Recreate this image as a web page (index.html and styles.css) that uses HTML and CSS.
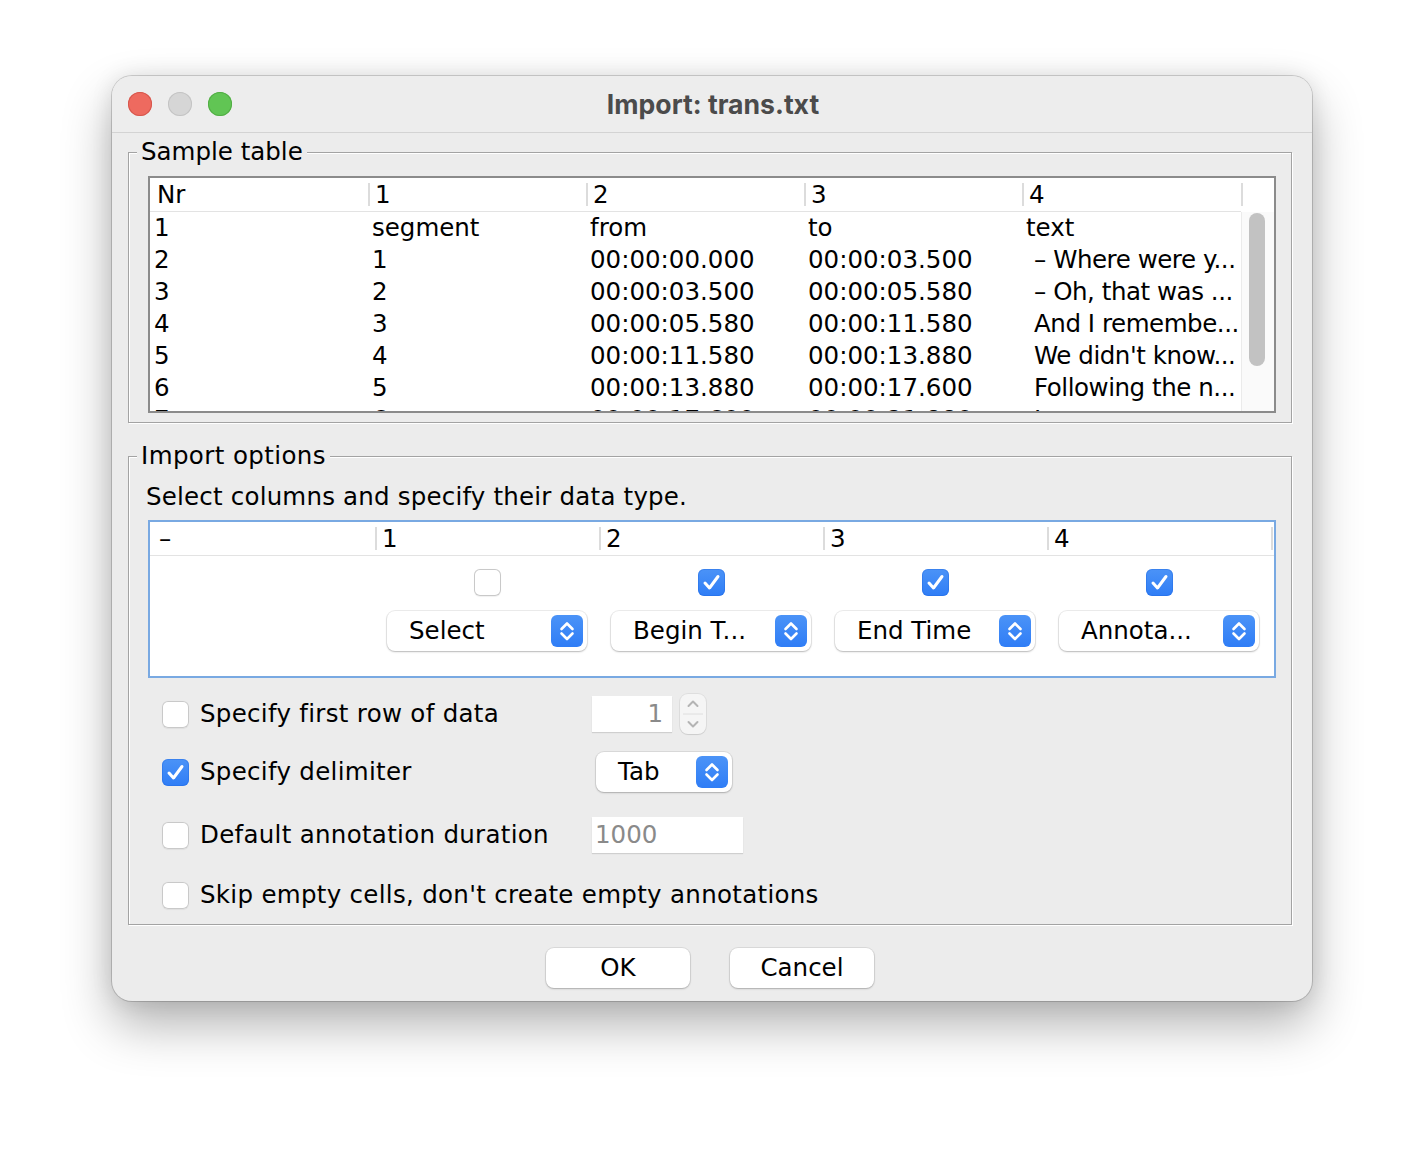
FILE: index.html
```html
<!DOCTYPE html>
<html>
<head>
<meta charset="utf-8">
<title>Import: trans.txt</title>
<link rel="stylesheet" href="styles.css">
</head>
<body>
<div class="window">
  <div class="titlebar">
    <div class="lights">
      <span class="light red"></span>
      <span class="light gray"></span>
      <span class="light green"></span>
    </div>
    <div class="title">Import: trans.txt</div>
    <div></div>
  </div>

  <div class="content">
    <section class="group sample-group">
      <div class="group-title">Sample table</div>
      <div class="table-box">
        <div class="table-main">
          <div class="thead">
            <div class="th first">Nr</div>
            <div class="th"><i class="sep"></i>1</div>
            <div class="th"><i class="sep"></i>2</div>
            <div class="th"><i class="sep"></i>3</div>
            <div class="th"><i class="sep"></i>4</div>
          </div>
          <div class="tbody">
            <div class="tr"><div class="td">1</div><div class="td">segment</div><div class="td">from</div><div class="td">to</div><div class="td">text</div></div>
            <div class="tr"><div class="td">2</div><div class="td">1</div><div class="td">00:00:00.000</div><div class="td">00:00:03.500</div><div class="td ind">– Where were y...</div></div>
            <div class="tr"><div class="td">3</div><div class="td">2</div><div class="td">00:00:03.500</div><div class="td">00:00:05.580</div><div class="td ind">– Oh, that was ...</div></div>
            <div class="tr"><div class="td">4</div><div class="td">3</div><div class="td">00:00:05.580</div><div class="td">00:00:11.580</div><div class="td ind">And I remembe...</div></div>
            <div class="tr"><div class="td">5</div><div class="td">4</div><div class="td">00:00:11.580</div><div class="td">00:00:13.880</div><div class="td ind">We didn't know...</div></div>
            <div class="tr"><div class="td">6</div><div class="td">5</div><div class="td">00:00:13.880</div><div class="td">00:00:17.600</div><div class="td ind">Following the n...</div></div>
            <div class="tr"><div class="td">7</div><div class="td">6</div><div class="td">00:00:17.600</div><div class="td">00:00:21.880</div><div class="td ind">I...</div></div>
          </div>
        </div>
        <div class="vscroll">
          <div class="corner"><i class="sep"></i></div>
          <div class="track"><div class="thumb"></div></div>
        </div>
      </div>
    </section>

    <section class="group options-group">
      <div class="group-title">Import options</div>
      <div class="hint">Select columns and specify their data type.</div>
      <div class="col-box">
        <div class="col-head">
          <div class="ch first">–</div>
          <div class="ch"><i class="sep"></i>1</div>
          <div class="ch"><i class="sep"></i>2</div>
          <div class="ch"><i class="sep"></i>3</div>
          <div class="ch"><i class="sep"></i>4</div>
          <div class="ch"><i class="sep"></i></div>
        </div>
        <div class="col-row">
          <div class="cc"></div>
          <div class="cc">
            <span class="cb"></span>
            <div class="combo"><span class="combo-text">Select</span><span class="stepper"><svg viewBox="0 0 32 32" width="32" height="32"><path d="M10.5 14 L16 8.5 L21.5 14 M10.5 18.5 L16 24 L21.5 18.5" fill="none" stroke="#fff" stroke-width="2.6" stroke-linecap="round" stroke-linejoin="round"/></svg></span></div>
          </div>
          <div class="cc">
            <span class="cb on"><svg viewBox="0 0 27 27" width="27" height="27"><path d="M7 14 L11.5 19 L20 7.5" fill="none" stroke="#fff" stroke-width="3" stroke-linecap="round" stroke-linejoin="round"/></svg></span>
            <div class="combo"><span class="combo-text">Begin T...</span><span class="stepper"><svg viewBox="0 0 32 32" width="32" height="32"><path d="M10.5 14 L16 8.5 L21.5 14 M10.5 18.5 L16 24 L21.5 18.5" fill="none" stroke="#fff" stroke-width="2.6" stroke-linecap="round" stroke-linejoin="round"/></svg></span></div>
          </div>
          <div class="cc">
            <span class="cb on"><svg viewBox="0 0 27 27" width="27" height="27"><path d="M7 14 L11.5 19 L20 7.5" fill="none" stroke="#fff" stroke-width="3" stroke-linecap="round" stroke-linejoin="round"/></svg></span>
            <div class="combo"><span class="combo-text">End Time</span><span class="stepper"><svg viewBox="0 0 32 32" width="32" height="32"><path d="M10.5 14 L16 8.5 L21.5 14 M10.5 18.5 L16 24 L21.5 18.5" fill="none" stroke="#fff" stroke-width="2.6" stroke-linecap="round" stroke-linejoin="round"/></svg></span></div>
          </div>
          <div class="cc">
            <span class="cb on"><svg viewBox="0 0 27 27" width="27" height="27"><path d="M7 14 L11.5 19 L20 7.5" fill="none" stroke="#fff" stroke-width="3" stroke-linecap="round" stroke-linejoin="round"/></svg></span>
            <div class="combo"><span class="combo-text">Annota...</span><span class="stepper"><svg viewBox="0 0 32 32" width="32" height="32"><path d="M10.5 14 L16 8.5 L21.5 14 M10.5 18.5 L16 24 L21.5 18.5" fill="none" stroke="#fff" stroke-width="2.6" stroke-linecap="round" stroke-linejoin="round"/></svg></span></div>
          </div>
          <div class="cc"></div>
        </div>
      </div>

      <div class="opts">
        <div class="opt r1">
          <div class="opt-label"><span class="cb"></span>Specify first row of data</div>
          <div class="opt-ctrl">
            <div class="field num">1</div>
            <div class="spin">
              <svg viewBox="0 0 26 40" width="26" height="40"><path d="M8.5 12 L13 7.5 L17.5 12 M8.5 28 L13 32.5 L17.5 28" fill="none" stroke="#b4b4b4" stroke-width="2" stroke-linecap="round" stroke-linejoin="round"/><line x1="3" y1="20" x2="23" y2="20" stroke="#dedede" stroke-width="1"/></svg>
            </div>
          </div>
        </div>
        <div class="opt r2">
          <div class="opt-label"><span class="cb on"><svg viewBox="0 0 27 27" width="27" height="27"><path d="M7 14 L11.5 19 L20 7.5" fill="none" stroke="#fff" stroke-width="3" stroke-linecap="round" stroke-linejoin="round"/></svg></span>Specify delimiter</div>
          <div class="opt-ctrl">
            <div class="combo small"><span class="combo-text">Tab</span><span class="stepper"><svg viewBox="0 0 32 32" width="32" height="32"><path d="M10.5 14 L16 8.5 L21.5 14 M10.5 18.5 L16 24 L21.5 18.5" fill="none" stroke="#fff" stroke-width="2.6" stroke-linecap="round" stroke-linejoin="round"/></svg></span></div>
          </div>
        </div>
        <div class="opt r3">
          <div class="opt-label"><span class="cb"></span>Default annotation duration</div>
          <div class="opt-ctrl">
            <div class="field wide">1000</div>
          </div>
        </div>
        <div class="opt r4">
          <div class="opt-label"><span class="cb"></span>Skip empty cells, don't create empty annotations</div>
        </div>
      </div>
    </section>

    <div class="buttons">
      <button class="btn">OK</button>
      <button class="btn">Cancel</button>
    </div>
  </div>
</div>
</body>
</html>
```

FILE: styles.css
```css
* { box-sizing: border-box; }

html, body {
  margin: 0;
  padding: 0;
  background: #ffffff;
}

body {
  font-family: "DejaVu Sans", "Liberation Sans", sans-serif;
  font-size: 24.5px;
  color: #000;
  height: 1150px;
  overflow: hidden;
}

.window {
  width: 1200px;
  margin: 76px 0 0 112px;
  background: #ececec;
  border-radius: 20px;
  overflow: hidden;
  box-shadow:
    0 0 0 1px rgba(0, 0, 0, 0.16),
    0 24px 50px rgba(0, 0, 0, 0.30),
    0 0 22px rgba(0, 0, 0, 0.10);
}

/* ---------- title bar ---------- */
.titlebar {
  height: 57px;
  border-bottom: 1px solid #d3d3d3;
  display: grid;
  grid-template-columns: 1fr auto 1fr;
  align-items: center;
  background: #ededed;
}

.lights {
  display: flex;
  gap: 16px;
  padding-left: 16px;
}

.light {
  width: 24px;
  height: 24px;
  border-radius: 50%;
  display: block;
}
.light.red { background: #ee6a5f; box-shadow: inset 0 0 0 1px #d6574d; }
.light.gray { background: #d6d6d6; box-shadow: inset 0 0 0 1px #c4c4c4; }
.light.green { background: #61c554; box-shadow: inset 0 0 0 1px #52ad45; }

.title {
  font-family: "Inter", "DejaVu Sans", sans-serif;
  font-weight: 700;
  font-size: 26.6px;
  color: #4b4b4b;
  padding-left: 2px;
}

/* ---------- content ---------- */
.content {
  padding: 19px 20px 13px 16px;
}

.group {
  position: relative;
  width: 1164px;
  border: 1px solid #a3a3a3;
  box-shadow: 1px 1px 0 #ffffff, inset 1px 1px 0 #ffffff;
  padding-left: 19px;
  padding-right: 15px;
}

.group-title {
  position: absolute;
  top: -16px;
  left: 8px;
  padding: 0 4px;
  line-height: 30px;
  background: #ececec;
}
.options-group .group-title { letter-spacing: 0.4px; }

.sample-group {
  padding-top: 23px;
  padding-bottom: 9px;
}

.options-group {
  margin-top: 33px;
  padding-top: 25px;
  padding-bottom: 14px;
}

/* ---------- sample table ---------- */
.table-box {
  display: flex;
  height: 237px;
  border: 2px solid #8b8b8b;
  background: #fff;
}

.table-main {
  width: 1091px;
}

.thead {
  display: grid;
  grid-template-columns: 218px 218px 218px 218px 219px;
  height: 34px;
  border-bottom: 1px solid #e3e3e3;
}

.th {
  display: flex;
  align-items: center;
  line-height: 33px;
  white-space: nowrap;
}
.th.first { padding-left: 7px; }

.sep {
  display: block;
  width: 2px;
  height: 23px;
  background: #dcdcdc;
  margin-right: 5px;
  flex: none;
}

.tbody {
  height: 199px;
  overflow: hidden;
}

.tr {
  display: grid;
  grid-template-columns: 218px 218px 218px 218px 219px;
  height: 32px;
}

.td {
  line-height: 32px;
  padding-left: 4px;
  white-space: nowrap;
  overflow: hidden;
}
.td.ind {
  padding-left: 12px;
  letter-spacing: -0.45px;
}

.vscroll {
  width: 33px;
  display: flex;
  flex-direction: column;
}

.corner {
  height: 34px;
  display: flex;
  align-items: center;
}
.corner .sep { margin-bottom: 1px; }

.track {
  flex: 1;
  background: #fafafa;
  border-left: 1px solid #ebebeb;
  padding: 1px 0 0 7px;
}

.thumb {
  width: 16px;
  height: 153px;
  border-radius: 8px;
  background: #c2c2c2;
}

/* ---------- options ---------- */
.hint {
  line-height: 30px;
  margin-left: -2px;
  letter-spacing: 0.2px;
}

.col-box {
  margin-top: 8px;
  height: 158px;
  border: 2px solid #79a9e2;
  background: #fff;
}

.col-head {
  display: grid;
  grid-template-columns: 225px 224px 224px 224px 224px 3px;
  height: 34px;
  border-bottom: 1px solid #e3e3e3;
}

.ch {
  display: flex;
  align-items: center;
  line-height: 33px;
}
.ch.first { padding-left: 9px; }

.col-row {
  display: grid;
  grid-template-columns: 225px 224px 224px 224px 224px 3px;
  height: 120px;
}

.cc {
  display: flex;
  flex-direction: column;
  align-items: center;
  padding-top: 13px;
  gap: 15px;
}

.cb {
  width: 27px;
  height: 27px;
  border-radius: 6px;
  background: #fff;
  box-shadow: inset 0 0 0 1px #c9c9c9, 0 0.5px 1px rgba(0, 0, 0, 0.06);
  display: block;
  flex: none;
}
.cb svg { display: block; }
.cb.on {
  background: linear-gradient(#4b93f7, #2f7df6);
  box-shadow: inset 0 0 0 1px rgba(30, 100, 220, 0.35);
}

.combo {
  width: 200px;
  height: 40px;
  background: #fff;
  border-radius: 8px;
  box-shadow: 0 0 0 1px rgba(0, 0, 0, 0.07), 0 1px 2px rgba(0, 0, 0, 0.22);
  display: flex;
  align-items: center;
  padding-left: 22px;
  padding-right: 4px;
}
.combo.small {
  width: 136px;
  margin-left: 4px;
}

.combo-text {
  flex: 1;
  line-height: 40px;
  white-space: nowrap;
}

.stepper {
  width: 32px;
  height: 32px;
  border-radius: 6px;
  background: linear-gradient(#4b93f7, #2f7df6);
  display: block;
  flex: none;
}
.stepper svg { display: block; }

.opts {
  margin-top: 16px;
  padding-left: 14px;
}

.opt {
  display: grid;
  grid-template-columns: 430px auto;
  align-items: center;
}
.opt.r1 { height: 40px; }
.opt.r2 { height: 40px; margin-top: 18px; }
.opt.r3 { height: 36px; margin-top: 25px; }
.opt.r4 { height: 30px; margin-top: 27px; }

.opt-label {
  display: flex;
  align-items: center;
  gap: 11px;
  white-space: nowrap;
  line-height: 30px;
  letter-spacing: 0.3px;
}

.opt-ctrl {
  display: flex;
  align-items: center;
}

.field {
  height: 36px;
  background: #fff;
  color: #8a8a8a;
  line-height: 36px;
  box-shadow: 0 1px 1px rgba(0, 0, 0, 0.12);
}
.field.num {
  width: 80px;
  text-align: right;
  padding-right: 9px;
}
.field.wide {
  width: 151px;
  padding-left: 3px;
}

.spin {
  width: 26px;
  height: 40px;
  margin-left: 8px;
  border-radius: 8px;
  background: #f5f5f5;
  box-shadow: 0 0 0 1px rgba(0, 0, 0, 0.06), 0 1px 1px rgba(0, 0, 0, 0.08);
}
.spin svg { display: block; }

/* ---------- buttons ---------- */
.buttons {
  display: flex;
  justify-content: center;
  gap: 40px;
  margin-top: 23px;
}

.btn {
  width: 144px;
  height: 40px;
  border: none;
  border-radius: 8px;
  background: #fff;
  box-shadow: 0 0 0 1px rgba(0, 0, 0, 0.07), 0 1px 2px rgba(0, 0, 0, 0.22);
  font-family: "DejaVu Sans", "Liberation Sans", sans-serif;
  font-size: 24.5px;
  color: #000;
  padding: 0;
  line-height: 40px;
}
```
